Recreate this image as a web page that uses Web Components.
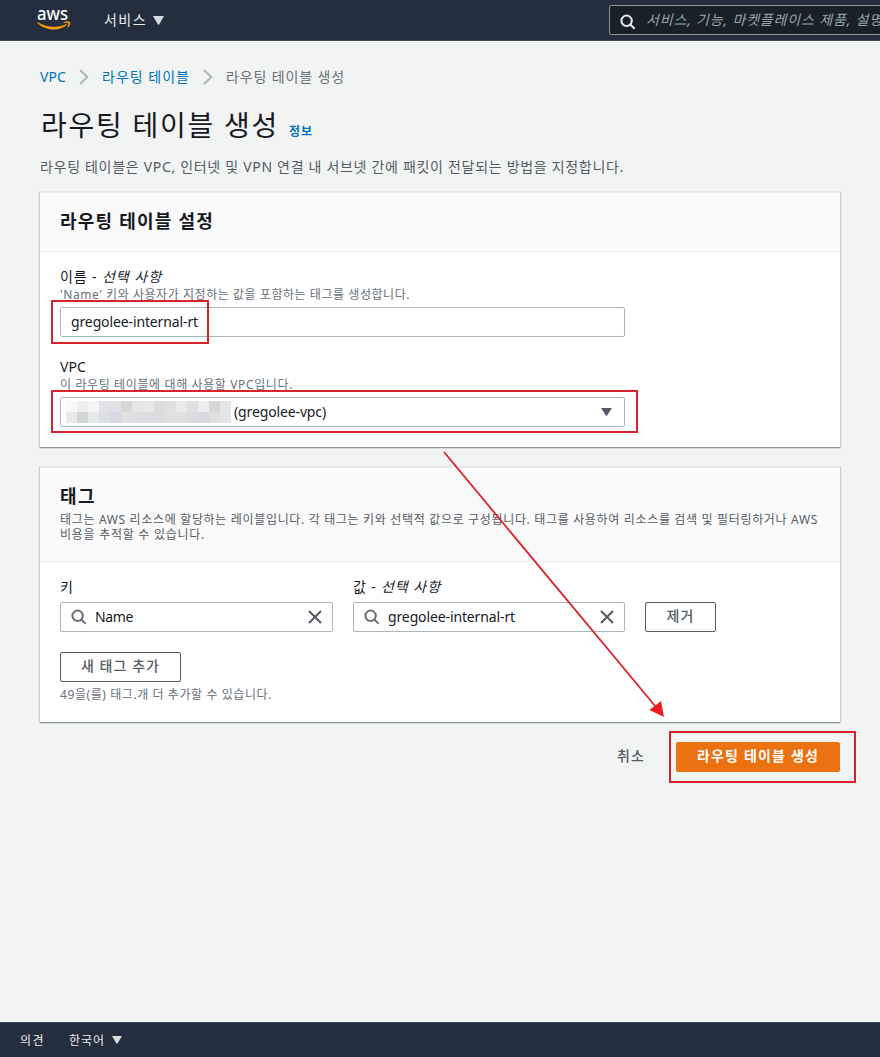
<!DOCTYPE html>
<html lang="ko">
<head>
<meta charset="utf-8">
<title>라우팅 테이블 생성</title>
<style>
html,body{margin:0;height:100%;overflow:hidden}
body{font-family:"Noto Sans","Noto Sans CJK KR",sans-serif;font-size:14px;color:#16191f;background:#f2f3f3}
</style>
</head>
<body>
<route-page></route-page>
<script>
const define = (name, html, setup) => customElements.define(name, class extends HTMLElement {
  constructor() {
    super();
    this.attachShadow({mode: 'open'}).innerHTML = html;
  }
  connectedCallback() { if (setup) setup(this, this.shadowRoot); }
});

/* One line of text, tracked so that it spans the width given in "w". */
define('fit-text', `<style>:host{display:inline-block;white-space:pre;flex:none}span{display:inline-block}</style><span><slot></slot></span>`, (el, root) => {
  const span = root.querySelector('span'), w = +el.getAttribute('w');
  el.style.width = w + 'px';
  const n = el.textContent.length;
  span.style.letterSpacing = (w - span.getBoundingClientRect().width) / n + 'px';
});

define('icon-search', `<style>:host{display:block;width:16px;height:16px;flex:none}svg{display:block}</style>
<svg width="16" height="16" viewBox="0 0 16 16" fill="none" stroke="currentColor" stroke-width="2"><circle cx="6.6" cy="6.8" r="5.2"/><path d="M10.4 10.6 14.6 14.7"/></svg>`);
define('icon-close', `<style>:host{display:block;width:14px;height:14px;flex:none}svg{display:block}</style>
<svg width="14" height="14" viewBox="0 0 14 14" fill="none" stroke="#545b64" stroke-width="2"><path d="M1 1 13 13M13 1 1 13"/></svg>`);
define('icon-caret', `<style>:host{display:block;width:10px;height:8px;flex:none}svg{display:block;width:100%;height:100%}</style>
<svg viewBox="0 0 10 8" preserveAspectRatio="none"><path d="M0 0H10L5.7 7.3Q5 8.3 4.3 7.3Z" fill="currentColor"/></svg>`);
define('icon-chevron', `<style>:host{display:block;width:10px;height:16px;flex:none}svg{display:block}</style>
<svg width="10" height="16" fill="none" stroke="#aab7b8" stroke-width="2"><path d="M1 1 8.3 8 1 15"/></svg>`);

define('aws-logo', `<style>:host{display:block;width:34px;height:24px;flex:none}svg{display:block;overflow:visible}text{font:500 18px "Noto Sans",sans-serif;fill:#fff}</style>
<svg width="34" height="24" viewBox="0 0 34 24"><text x="0" y="12" textLength="31" lengthAdjust="spacingAndGlyphs">aws</text>
<path d="M.3 14.1Q15 22.6 29.3 16.2Q30.8 15.6 30 16.8C23 23.4 8.5 23.4 .1 14.8Q-.3 14.2 .3 14.1Z" fill="#f90"/><path d="M26.6 14.2Q30.8 12.4 33 13.9Q33.8 16.6 30.9 19.6Q30.2 20 30.5 19.1Q32 16 31.4 15.2Q30.4 14.4 26.9 15Q26 14.8 26.6 14.2Z" fill="#f90"/></svg>`);

define('top-bar', `<style>
:host{display:flex;align-items:center;box-sizing:border-box;height:41px;background:#232f3e;border-bottom:1px solid #414750;color:#eaeded;padding-left:37px;overflow:hidden}
nav{display:flex;align-items:center;margin-left:33px;gap:6px;width:505px;flex:none;padding-bottom:2px}
nav icon-caret{width:11px;height:9px;color:#d5dbdb;margin-top:2px}
.search{display:flex;align-items:center;box-sizing:border-box;width:300px;height:30px;flex:none;border:1px solid #879596;border-radius:2px;background:#1a2029;padding-left:10px;gap:10px;color:#95a5a6}
icon-search{color:#eaeded;margin-top:3px}
i{line-height:20px;font-size:14px}
</style><aws-logo></aws-logo><nav><fit-text w="43">서비스</fit-text><icon-caret></icon-caret></nav>
<div class="search"><icon-search></icon-search><i><fit-text w="237">서비스, 기능, 마켓플레이스 제품, 설명</fit-text></i></div>`);

define('bread-crumb', `<style>
:host{display:flex;align-items:center;height:20px;line-height:20px;color:#687078}
a{color:#0073bb}icon-chevron{margin:0 13px}
</style><a><fit-text w="26">VPC</fit-text></a><icon-chevron></icon-chevron><a><fit-text w="88">라우팅 테이블</fit-text></a><icon-chevron></icon-chevron><fit-text w="119">라우팅 테이블 생성</fit-text>`);

define('ui-card', `<style>
:host{display:block;background:#fff;box-sizing:border-box;box-shadow:0 1px 1px -1px rgba(0,28,36,.3),1px 0 1px 0 rgba(0,28,36,.18),-1px 0 1px 0 rgba(0,28,36,.18);border-top:1px solid #eaeded;border-bottom:1px solid #879596}
header{box-sizing:border-box;height:var(--head);background:#fafafa;border-bottom:1px solid #eaeded;padding:15px 20px 0}
.body{padding:15px 20px 0}
</style><header><slot name="head"></slot></header><div class="body"><slot></slot></div>`);

define('ui-field', `<style>
:host{display:flex;align-items:center;box-sizing:border-box;height:30px;border:1px solid #aab7b8;border-radius:2px;background:#fff;padding:0 10px;line-height:28px}
icon-search{color:#687078;margin-right:8px}.grow{flex:1}icon-caret{width:11px;height:8px;color:#545b64;margin-right:2px}
[hidden]{display:none}
</style><icon-search hidden></icon-search><slot></slot><span class="grow"></span><icon-close hidden></icon-close><icon-caret hidden></icon-caret>`, (el, root) => {
  const kind = el.getAttribute('kind');
  root.querySelector('icon-search').hidden = root.querySelector('icon-close').hidden = kind !== 'search';
  root.querySelector('icon-caret').hidden = kind !== 'select';
});

define('ui-button', `<style>
:host{display:flex;align-items:center;justify-content:center;box-sizing:border-box;height:30px;border:1px solid #545b64;border-radius:2px;background:#fff;color:#545b64;font-weight:500;line-height:26px;padding-bottom:2px}
:host([kind=primary]){background:#ec7211;border-color:#ec7211;color:#fff;font-weight:700}
:host([kind=link]){background:none;border-color:transparent}
</style><slot></slot>`);

/* Pixelated identifier in front of the VPC name. */
define('masked-id', `<style>:host{display:grid;grid-template-columns:repeat(15,11px);grid-auto-rows:11px;flex:none;margin:0 3px 0 -5px}</style>`, (el, root) => {
  const colors = ('f8f8f7 ecefef f4f5f4 e0e2e5 dfe1e4 d6d7d5 e4e7e8 eae8e7 dadde0 dfe0e1 e9eaeb dedfde ebeef1 d7d6d5 e3e6e8 ' +
                  'e9eae9 d6d7d4 e5eaed dddfe2 d7dae0 dfe0df dddee1 dcdde0 dbdcde e2dfe0 e1dfdf d9dbe0 d7d9de e0dfdd e2e5e9').split(' ');
  for (const c of colors) {
    const cell = document.createElement('b');
    cell.style.background = '#' + c;
    root.append(cell);
  }
});

define('bottom-bar', `<style>
:host{display:flex;align-items:center;box-sizing:border-box;height:35px;background:#232f3e;border-top:1px solid #414750;color:#eaeded;font-size:12px;padding-left:20px}
icon-caret{margin-left:7px;color:#d5dbdb;width:10px;height:8px}.lang{margin-left:24px}
</style><fit-text w="25">의견</fit-text><fit-text class="lang" w="36">한국어</fit-text><icon-caret></icon-caret>`);

define('mark-layer', `<style>:host{position:absolute;left:0;top:0;pointer-events:none}svg{display:block}</style>
<svg width="880" height="1057" fill="none" stroke="#d9232b" stroke-width="2"><rect x="52" y="301" width="156" height="42"/><rect x="52" y="391" width="585" height="41"/><rect x="670" y="732" width="185" height="50"/><path d="M444 452 656 707" stroke-width="1.8"/><path d="M664 717 649.5 710 661 701Z" fill="#ed1c24" stroke="none"/></svg>`);

define('route-page', `<style>
:host{display:flex;flex-direction:column;height:1057px;width:880px;position:relative;overflow:hidden}
main{flex:1;padding:26px 40px 0}
h1,h2,p{margin:0;font-weight:400}
.title{display:flex;align-items:baseline;height:52px;margin-top:13px;gap:10px;padding-left:1px}
h1{font-size:28px;line-height:50px;font-weight:400}
.title a{font-size:12px;font-weight:700;color:#0073bb}
.desc{color:#545b64;line-height:20px;margin-top:5px;height:35px}
h2{font-size:18px;font-weight:700;line-height:26px}
.hint{font-size:12px;line-height:15px;color:#687078;height:15px}
.label{line-height:20px;height:20px}
.short{width:565px;box-sizing:border-box}
.a{--head:59px;height:256px}.b{--head:94px;height:256px;margin-top:19px}
.name{margin-top:5px}.vpc{margin-top:5px}
.row{display:grid;grid-template-columns:273px 272px 71px;column-gap:20px;margin-top:5px}
.labels{display:grid;grid-template-columns:273px 1fr;column-gap:20px;line-height:20px}
.add{width:121px;margin-top:20px}
.actions{display:flex;justify-content:flex-end;margin-top:19px}
.actions .cancel{width:70px;margin-right:10px}.actions .go{width:164px}
</style>
<top-bar></top-bar>
<main>
<bread-crumb></bread-crumb>
<div class="title"><h1><fit-text w="238">라우팅 테이블 생성</fit-text></h1><a><fit-text w="24">정보</fit-text></a></div>
<p class="desc"><fit-text w="584">라우팅 테이블은 VPC, 인터넷 및 VPN 연결 내 서브넷 간에 패킷이 전달되는 방법을 지정합니다.</fit-text></p>
<ui-card class="a"><h2 slot="head"><fit-text w="154">라우팅 테이블 설정</fit-text></h2>
<div class="label"><fit-text w="42">이름 - </fit-text><i><fit-text w="60">선택 사항</fit-text></i></div>
<p class="hint"><fit-text w="350">'Name' 키와 사용자가 지정하는 값을 포함하는 태그를 생성합니다.</fit-text></p>
<ui-field class="short name"><fit-text w="127">gregolee-internal-rt</fit-text></ui-field>
<div class="label" style="margin-top:20px"><fit-text w="26">VPC</fit-text></div>
<p class="hint"><fit-text w="233">이 라우팅 테이블에 대해 사용할 VPC입니다.</fit-text></p>
<ui-field class="short vpc" kind="select"><masked-id></masked-id><fit-text w="92">(gregolee-vpc)</fit-text></ui-field>
</ui-card>
<ui-card class="b"><div slot="head"><h2><fit-text w="36">태그</fit-text></h2>
<p class="hint" style="margin-top:3px;color:#545b64"><fit-text w="758">태그는 AWS 리소스에 할당하는 레이블입니다. 각 태그는 키와 선택적 값으로 구성됩니다. 태그를 사용하여 리소스를 검색 및 필터링하거나 AWS</fit-text></p><p class="hint" style="color:#545b64"><fit-text w="145">비용을 추적할 수 있습니다.</fit-text></p></div>
<div class="labels"><span><fit-text w="14">키</fit-text></span><span><fit-text w="28">값 - </fit-text><i><fit-text w="60">선택 사항</fit-text></i></span></div>
<div class="row"><ui-field kind="search"><fit-text w="38">Name</fit-text></ui-field><ui-field kind="search"><fit-text w="127">gregolee-internal-rt</fit-text></ui-field><ui-button><fit-text w="28">제거</fit-text></ui-button></div>
<ui-button class="add"><fit-text w="79">새 태그 추가</fit-text></ui-button>
<p class="hint" style="margin-top:5px"><fit-text w="212">49을(를) 태그.개 더 추가할 수 있습니다.</fit-text></p>
</ui-card>
<div class="actions"><ui-button kind="link" class="cancel"><fit-text w="28">취소</fit-text></ui-button><ui-button kind="primary" class="go"><fit-text w="122">라우팅 테이블 생성</fit-text></ui-button></div>
</main>
<bottom-bar></bottom-bar>
<mark-layer></mark-layer>`);
</script>
</body>
</html>
